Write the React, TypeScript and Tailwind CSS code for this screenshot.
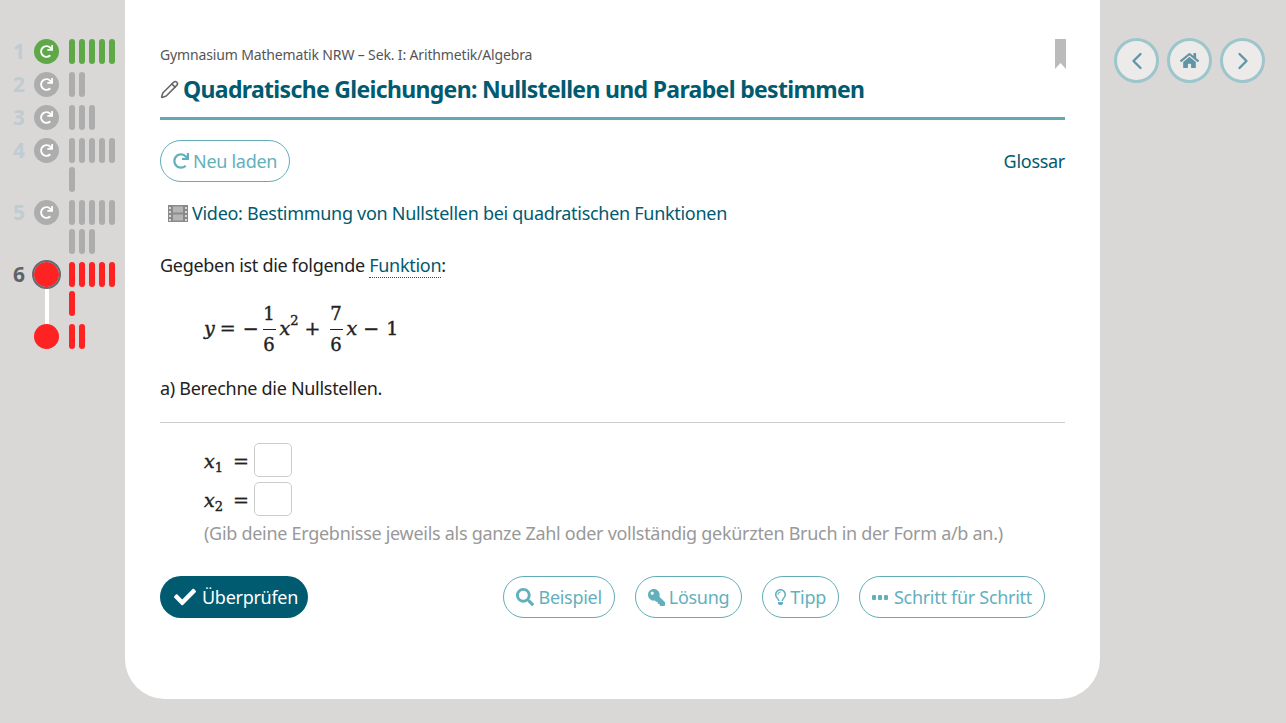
import { ReactNode } from 'react';
import { FaCheck, FaHome, FaKey, FaRedo, FaRegLightbulb, FaSearch } from 'react-icons/fa';
import { LuChevronLeft, LuChevronRight, LuPencil } from 'react-icons/lu';

type Row = { n?: number; state: 'done' | 'open' | 'wrong'; bars: number; active?: boolean };

const rows: Row[] = [
  { n: 1, state: 'done', bars: 5 },
  { n: 2, state: 'open', bars: 2 },
  { n: 3, state: 'open', bars: 3 },
  { n: 4, state: 'open', bars: 6 },
  { n: 5, state: 'open', bars: 8 },
  { n: 6, state: 'wrong', bars: 6, active: true },
  { state: 'wrong', bars: 2 },
];

const bgByState = { done: 'bg-[#5fa847]', open: 'bg-[#adadad]', wrong: 'bg-[#ff2222]' };

function ProgressRow({ row }: { row: Row }) {
  return (
    <div className="flex">
      <div className={`w-[25px] h-[25px] text-right text-[21px] leading-[25px] font-bold tracking-normal ${row.active ? 'text-[#5f6268]' : 'text-[#c0cbd2]'}`}>
        {row.n}
      </div>
      <div className="relative ml-[9px] w-[25px] h-[25px]">
        <div className={`w-[25px] h-[25px] rounded-full flex items-center justify-center ${bgByState[row.state]}`}>
          {row.state !== 'wrong' && <FaRedo className="text-white w-[13px] h-[13px]" />}
        </div>
        {row.active && (
          <>
            <div className="absolute -inset-[2px] rounded-full border-2 border-[#666a72]" />
            <div className="absolute left-[10.5px] top-[27px] w-[4px] h-[35px] bg-white" />
          </>
        )}
      </div>
      <div className="ml-[10px] w-[50px] flex flex-wrap gap-x-[4px] gap-y-[4px]">
        {Array.from({ length: row.bars }).map((_, i) => (
          <div key={i} className={`w-[6px] h-[25px] rounded-full ${bgByState[row.state]}`} />
        ))}
      </div>
    </div>
  );
}

function OutlineButton({ icon, children }: { icon: ReactNode; children: ReactNode }) {
  return (
    <button className="h-[42px] px-[12px] flex items-center gap-[4px] rounded-full border border-[#63adb9] text-[#63b0bd] text-[18px] bg-white whitespace-nowrap">
      {icon}
      {children}
    </button>
  );
}

function NavButton({ children }: { children: ReactNode }) {
  return (
    <button className="w-[45px] h-[45px] rounded-full bg-[#ecebea] border-[3px] border-[#9cc6cc] text-[#5f95a5] flex items-center justify-center">
      {children}
    </button>
  );
}

function Frac({ a, b }: { a: string; b: string }) {
  return (
    <span className="inline-flex flex-col items-center text-[18px] leading-[25px]">
      <span className="w-[13px] text-center border-b border-[#222] pb-[3px]">{a}</span>
      <span className="pt-[2px]">{b}</span>
    </span>
  );
}

export default function App() {
  return (
    <div className="w-full h-[723px] bg-[#d9d8d6] flex items-start overflow-hidden text-[#222] tracking-[-0.29px] font-['Noto_Sans',sans-serif]">
      {/* Progress */}
      <aside className="w-[125px] shrink-0 pt-[39px] flex flex-col gap-[8px]">
        {rows.map((r, i) => (
          <ProgressRow key={i} row={r} />
        ))}
      </aside>

      {/* Card */}
      <main className="w-[975px] h-[699px] shrink-0 bg-white rounded-b-[40px] px-[35px] pt-[45px]">
        <header className="relative border-b-[3px] border-[#63a9b3] h-[75px]">
          <div className="text-[14px] leading-[20px] text-[#555] tracking-[-0.15px]">Gymnasium Mathematik NRW – Sek. I: Arithmetik/Algebra</div>
          <h1 className="mt-[8px] flex items-center gap-[4px] text-[23px] leading-[32px] font-bold text-[#005a70] tracking-[-0.67px]">
            <LuPencil className="w-[19px] h-[19px] text-[#666] shrink-0" />
            Quadratische Gleichungen: Nullstellen und Parabel bestimmen
          </h1>
          <svg className="absolute right-[-1px] top-[-6px]" width="11" height="30" viewBox="0 0 11 30">
            <path d="M0 0H11V30L5.5 24L0 30Z" fill="#bbbbbb" />
          </svg>
        </header>

        <div className="mt-[20px] flex items-center justify-between">
          <OutlineButton icon={<FaRedo className="w-[16px] h-[16px]" />}>Neu laden</OutlineButton>
          <a className="text-[18px] text-[#005a70]">Glossar</a>
        </div>

        <div className="mt-[17px] ml-[8px] flex items-center gap-[4px] text-[18px] leading-[28px] text-[#005a70]">
          <svg width="20" height="17" viewBox="0 0 20 17">
            <rect width="20" height="17" fill="#8a8a8a" />
            <path d="M1 2h2v2H1zM1 6h2v2H1zM1 10h2v2H1zM1 14h2v2H1zM17 2h2v2h-2zM17 6h2v2h-2zM17 10h2v2h-2zM17 14h2v2h-2z" fill="#d8d8d8" />
            <path d="M5 1.5h10v6H5zM5 9.5h10v6H5z" fill="#b5b5b5" />
          </svg>
          Video: Bestimmung von Nullstellen bei quadratischen Funktionen
        </div>

        <p className="mt-[24px] text-[18px] leading-[28px]">
          Gegeben ist die folgende{' '}
          <span className="text-[#005a70] border-b border-dotted border-[#444]">Funktion</span>:
        </p>

        <div className="mt-[19px] ml-[44px] h-[60px] flex items-center text-[19px] tracking-normal font-['DejaVu_Serif',serif] [-webkit-text-stroke:0.4px]">
          <i>y</i>
          <span className="ml-[5px]">=</span>
          <span className="ml-[7px]">−</span>
          <span className="ml-[4px]">
            <Frac a="1" b="6" />
          </span>
          <i className="ml-[4px]">x</i>
          <span className="text-[13px] -mt-[14px]">2</span>
          <span className="ml-[6px]">+</span>
          <span className="ml-[9px]">
            <Frac a="7" b="6" />
          </span>
          <i className="ml-[4px]">x</i>
          <span className="ml-[6px]">−</span>
          <span className="ml-[7px]">1</span>
        </div>

        <p className="mt-[16px] text-[18px] leading-[28px]">a) Berechne die Nullstellen.</p>

        <hr className="mt-[20px] border-[#ccc]" />

        <div className="mt-[20px] ml-[44px] flex flex-col gap-[5px]">
          {['1', '2'].map((s) => (
            <div key={s} className="h-[34px] flex items-center gap-[5px] font-['DejaVu_Serif',serif] text-[19px] tracking-normal [-webkit-text-stroke:0.4px]">
              <span className="w-[45px] flex items-center justify-between pt-[2px]">
                <span className="flex items-end">
                  <i className="leading-[24px]">x</i>
                  <span className="text-[13px] leading-[14px] -mb-[2px]">{s}</span>
                </span>
                <span>=</span>
              </span>
              <input className="w-[38px] h-[34px] rounded-[5px] border border-[#ccc] bg-white" />
            </div>
          ))}
        </div>

        <p className="mt-[3px] ml-[44px] text-[18px] leading-[28px] text-[#999]">
          (Gib deine Ergebnisse jeweils als ganze Zahl oder vollständig gekürzten Bruch in der Form a/b an.)
        </p>

        <div className="mt-[29px] flex items-center justify-between pr-[20px]">
          <button className="h-[42px] w-[148px] rounded-full bg-[#005a70] text-white text-[18px] flex items-center pl-[14px] gap-[6px]">
            <FaCheck className="w-[22px] h-[22px]" />
            Überprüfen
          </button>
          <div className="flex gap-[20px]">
            <OutlineButton icon={<FaSearch className="w-[18px] h-[18px]" />}>Beispiel</OutlineButton>
            <OutlineButton icon={<FaKey className="w-[17px] h-[17px] scale-x-[-1]" />}>Lösung</OutlineButton>
            <OutlineButton icon={<FaRegLightbulb className="w-[11px] h-[18px]" />}>Tipp</OutlineButton>
            <OutlineButton
              icon={
                <svg width="18" height="5" viewBox="0 0 18 5" fill="currentColor">
                  <rect x="0" width="4" height="5" rx="1" />
                  <rect x="6" width="4" height="5" rx="1" />
                  <rect x="12" width="4" height="5" rx="1" />
                </svg>
              }
            >
              Schritt für Schritt
            </OutlineButton>
          </div>
        </div>
      </main>

      {/* Navigation */}
      <nav className="ml-[14px] mt-[38px] flex gap-[8px]">
        <NavButton>
          <LuChevronLeft className="w-[28px] h-[28px]" />
        </NavButton>
        <NavButton>
          <FaHome className="w-[19px] h-[19px]" />
        </NavButton>
        <NavButton>
          <LuChevronRight className="w-[28px] h-[28px]" />
        </NavButton>
      </nav>
    </div>
  );
}
